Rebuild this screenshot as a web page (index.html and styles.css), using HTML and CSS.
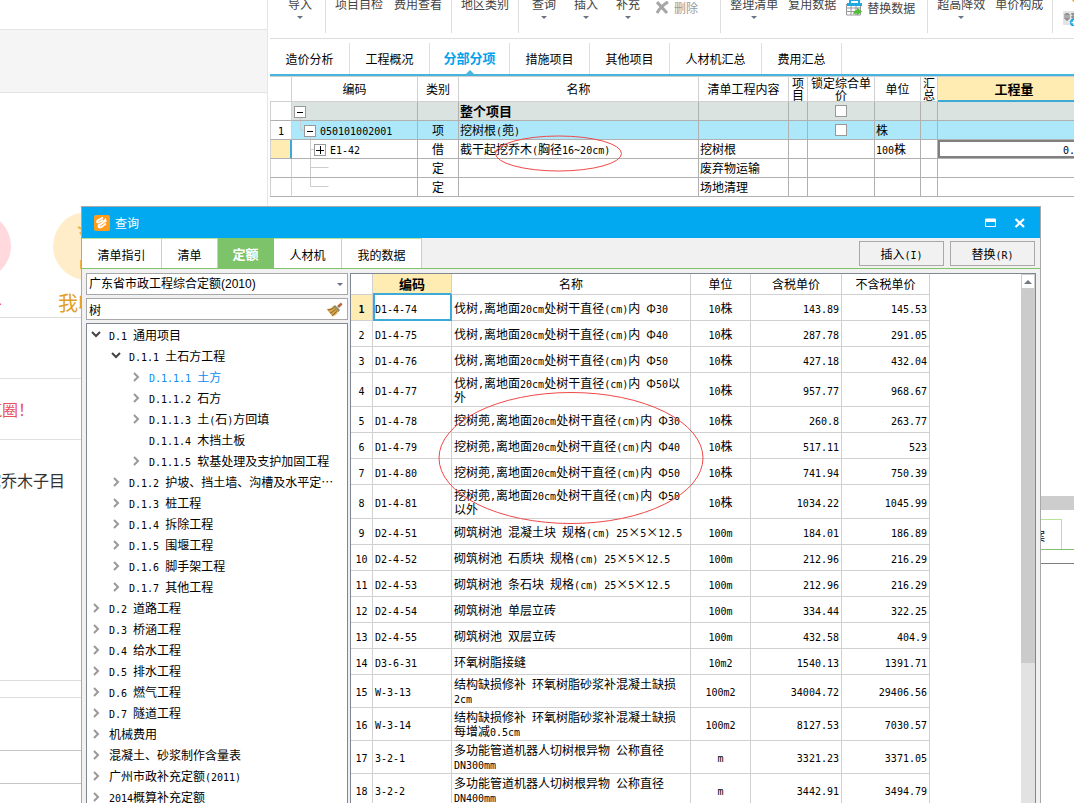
FILE: index.html
```html
<!DOCTYPE html>
<html lang="zh-CN">
<head>
<meta charset="utf-8">
<title>查询</title>
<link rel="stylesheet" href="styles.css">
</head>
<body>
<div class="desktop">
  <aside class="web">
    <div class="web-top"></div>
    <div class="web-banner"></div>
    <div class="web-cards">
      <div class="circles">
        <span class="circle pink"></span>
        <span class="circle amber">
          <svg width="68" height="68" viewBox="0 0 68 68" fill="none" stroke="#f0b64a" stroke-width="2"><path d="M25 15l4 2 2 5M27 20l4 6M28 48v8l6 2"/></svg>
        </span>
      </div>
      <div class="circle-labels"><span class="l-pink">平</span><span class="l-amber">我收藏</span></div>
    </div>
    <div class="web-gap"></div>
    <div class="web-line red"><span>筑圈！</span></div>
    <div class="web-question"><span>挖乔木子目</span></div>
    <div class="web-r1"></div>
    <div class="web-r2"></div>
    <div class="web-r3"></div>
  </aside>

  <main class="app">
    <div class="ribbon">
      <div class="group g1"><button class="tool">导入<i class="caret"></i></button></div>
      <div class="group g2"><button class="tool">项目自检</button><button class="tool">费用查看</button></div>
      <div class="group g3"><button class="tool">地区类别</button></div>
      <div class="group g4">
        <button class="tool">查询<i class="caret"></i></button>
        <button class="tool">插入<i class="caret"></i></button>
        <button class="tool">补充<i class="caret"></i></button>
        <button class="tool wide off"><svg width="13" height="13" viewBox="0 0 13 13" fill="none" stroke="#a5a5a5" stroke-width="3"><path d="M1 1l10 11M12 1Q5 5 1 12"/></svg>删除</button>
      </div>
      <div class="group g5">
        <button class="tool">整理清单<i class="caret"></i></button>
        <button class="tool">复用数据</button>
        <button class="tool wide"><svg width="16" height="16" viewBox="0 0 16 16"><path d="M.5 4v11h14V6" fill="#fff" stroke="#999"/><path d="M.5 8h14M.5 11.500h14M5 5v10M10 5v10" stroke="#999" fill="none"/><path d="M3 0h11v3H3zM1 3h15v3H1z" fill="#20a9e1"/><path d="M5 1h7v2H5z" fill="#fff"/><path d="M7 14q1-4 4-4V7.500l5 4-5 4v-2q-2 0-4 .5z" fill="#4fbf37"/></svg>替换数据</button>
      </div>
      <div class="group g6"><button class="tool">超高降效<i class="caret"></i></button><button class="tool">单价构成</button></div>
      <div class="group g7">
        <svg width="18" height="26" viewBox="0 0 18 26"><circle cx="13" cy="-1" r="3" fill="#ffa216"/><rect x="1" y="11" width="16" height="14" rx="1" fill="#e3e3e3"/><path d="M3 14h4v5H3zM5 13v8M9 14h6M9 17h6M11 13v7" stroke="#777" fill="none"/><circle cx="12" cy="22.500" r="4" fill="#19a9e5"/><path d="M12 20v5M9.500 22.500h5" stroke="#fff" stroke-width="1.500"/></svg>
      </div>
    </div>
    <nav class="tabs">
      <a href="#a">造价分析</a><a href="#b">工程概况</a><a href="#c" class="on">分部分项</a><a href="#d">措施项目</a><a href="#e">其他项目</a><a href="#f" class="w">人材机汇总</a><a href="#g">费用汇总</a>
    </nav>
    <div class="sheet">
      <table class="items">
        <colgroup><col class="i0"><col class="i1"><col class="i2"><col class="i3"><col class="i4"><col class="i5"><col class="i6"><col class="i7"><col class="i8"><col></colgroup>
        <thead><tr><th></th><th>编码</th><th>类别</th><th>名称</th><th>清单工程内容</th><th>项目</th><th>锁定综合单价</th><th>单位</th><th>汇总</th><th class="sel">工程量</th></tr></thead>
        <tbody>
          <tr class="total"><td></td>
            <td class="code"><svg class="guide" width="60" height="19"><path d="M8.500 15v4"/></svg><button class="exp" aria-label="收起"><svg width="10" height="10"><path d="M2 5h6"/></svg></button></td>
            <td></td><td class="strong">整个项目</td><td></td><td></td><td class="c"><input type="checkbox" aria-label="锁定综合单价"></td><td></td><td></td><td></td></tr>
          <tr class="picked"><td class="c"><span class="hw">1</span></td>
            <td class="code d1"><svg class="guide" width="60" height="19"><path d="M8.500 0v9.500h4M18.500 15v4"/></svg><button class="exp" aria-label="收起"><svg width="10" height="10"><path d="M2 5h6"/></svg></button><span class="hw">050101002001</span></td>
            <td class="c">项</td><td>挖树根<span class="hw">(</span>蔸<span class="hw">)</span></td><td></td><td></td><td class="c"><input type="checkbox" aria-label="锁定综合单价"></td><td>株</td><td></td><td></td></tr>
          <tr><td class="cur"></td>
            <td class="code d2"><svg class="guide" width="60" height="19"><path d="M18.500 0v19M18.500 9.500h4"/></svg><button class="exp" aria-label="展开"><svg width="10" height="10"><path d="M1 5h8M5 1v8"/></svg></button><span class="hw">E1-42</span></td>
            <td class="c">借</td><td>截干起挖乔木<span class="hw">(</span>胸径<span class="hw">16~20cm)</span></td><td>挖树根</td><td></td><td></td><td><span class="hw">100</span>株</td><td></td><td class="qty"><span class="hw">0.</span></td></tr>
          <tr><td></td><td class="code"><svg class="guide" width="60" height="19"><path d="M18.500 0v19M18.500 8.500h18"/></svg></td>
            <td class="c">定</td><td></td><td>废弃物运输</td><td></td><td></td><td></td><td></td><td></td></tr>
          <tr><td></td><td class="code"><svg class="guide" width="60" height="19"><path d="M18.500 0v8.500h18"/></svg></td>
            <td class="c">定</td><td></td><td>场地清理</td><td></td><td></td><td></td><td></td><td></td></tr>
        </tbody>
      </table>
    </div>
    <div class="hbar"></div>
    <div class="lower"><span>方案</span></div>
    <div class="lower-line"></div>
  </main>

  <svg class="mark mark-s" viewBox="0 0 127 37" aria-hidden="true"><ellipse cx="63.500" cy="18.500" rx="63" ry="17.500"/></svg>

  <section class="dialog" role="dialog" aria-labelledby="dlg-title">
    <header class="title">
      <svg width="16" height="16" viewBox="0 0 16 16"><rect width="16" height="16" rx="2" fill="#ff9c1b"/><path d="M9 2.500L3.500 5.500q-1.500 2 1 2L9 5M12.500 5.500L7 9q-3 .5-2.500 2.500 1 2 3 .5l4.500-3.500" fill="none" stroke="#fff" stroke-width="1.700"/><path d="M12 3.500L4 12.500" stroke="#fff" stroke-width="1.200"/></svg>
      <span id="dlg-title">查询</span>
      <button aria-label="最大化"><svg width="12" height="10" viewBox="0 0 12 10"><path d="M.5 1h10v7.500H.5z" fill="none" stroke="#fff"/><path d="M0 1h11v3H0z" fill="#fff"/></svg></button>
      <button aria-label="关闭"><svg width="12" height="10" viewBox="0 0 12 10"><path d="M1.500 1l8.500 8M10 1L1.500 9" stroke="#fff" stroke-width="2.200"/></svg></button>
    </header>
    <div class="bar">
      <nav class="dtabs">
        <a href="#1" class="t1">清单指引</a><a href="#2" class="t2">清单</a><a href="#3" class="t2 on">定额</a><a href="#4" class="t3">人材机</a><a href="#5" class="t1">我的数据</a>
      </nav>
      <button class="btn">插入<span class="hw">(I)</span></button>
      <button class="btn">替换<span class="hw">(R)</span></button>
    </div>
    <div class="panes">
      <div class="left">
        <div class="field">
          <select aria-label="定额库"><option>广东省市政工程综合定额(2010)</option></select>
          <i class="caret"></i>
        </div>
        <div class="field">
          <input type="text" value="树" aria-label="查询内容">
          <svg width="17" height="15" viewBox="0 0 17 15"><path d="M11 4l4-3.500 1.500 2L13 6z" fill="#b9653c"/><path d="M9 3l5 5-1.500 2-6-5z" fill="#8c8a60"/><path d="M7 4.500L12.500 9Q11 13 6.500 14.500L.5 7Q5 7 7 4.500z" fill="#d9a94f"/><path d="M2 8q4-.5 6-2.500M4 11q4-1 5.500-4M6 13.500q3.500-2 5-5" stroke="#8c6327" fill="none"/></svg>
        </div>
        <ul class="tree" id="tree"></ul>
      </div>
      <div class="result">
        <div class="scroll">
          <table class="norms">
            <colgroup><col class="n0"><col class="n1"><col class="n2"><col class="n3"><col class="n4"><col class="n5"></colgroup>
            <thead><tr><th></th><th class="sel">编码</th><th>名称</th><th>单位</th><th>含税单价</th><th>不含税单价</th></tr></thead>
            <tbody id="norms"></tbody>
          </table>
        </div>
        <div class="vbar"><button aria-label="向上"></button><div class="thumb"></div></div>
      </div>
    </div>
  </section>

  <svg class="mark mark-l" viewBox="0 0 266 132" aria-hidden="true"><ellipse cx="133" cy="66" rx="132" ry="65.500"/></svg>
</div>
<script src="app.js"></script>
</body>
</html>
```
FILE: styles.css
```css
* { box-sizing: border-box; }
body {
  margin: 0;
  background: #fff;
  color: #000;
  font: 12px/16px "Noto Sans CJK SC", sans-serif;
}
button, input, select { font: inherit; color: inherit; margin: 0; padding: 0; border: 0; background: none; }
a { color: inherit; text-decoration: none; }
svg { display: block; flex: none; }
.hw { font-family: "DejaVu Sans Mono", monospace; font-size: 10px; line-height: 10px; }
.fw { display: inline-block; width: 12px; line-height: 12px; text-align: center; }
.caret { display: block; width: 0; border: 3px solid transparent; border-top-color: #6a7385; border-bottom: 0; }

.desktop { position: relative; display: flex; height: 100vh; overflow: hidden; }

/* web page behind the application */
.web { width: 268px; flex: none; border-right: 1px solid #e6e6e6; overflow: hidden; }
.web-top { height: 30px; border-bottom: 1px solid #e4e4e4; }
.web-banner { height: 63px; background: #f5f5f5; border-bottom: 1px solid #e4e4e4; }
.web-cards { height: 225px; padding-top: 119px; border-bottom: 1px solid #dcdcdc; }
.circles { display: flex; gap: 42px; margin-left: -57px; }
.circle { width: 68px; height: 68px; border-radius: 50%; overflow: hidden; flex: none; }
.pink { background: #ffd9de; }
.amber { background: #ffedca; }
.circle-labels { display: flex; gap: 56px; margin-left: -18px; margin-top: 10px; font-size: 20px; line-height: 26px; }
.l-pink { color: #ee4f86; }
.l-amber { color: #dfa01f; }
.web-gap { height: 61px; border-bottom: 1px solid #e0e0e0; }
.web-line, .web-question { display: flex; justify-content: flex-end; overflow: hidden; font-size: 16px; }
.web-line { height: 61px; padding-right: 233px; align-items: center; border-bottom: 1px solid #e0e0e0; color: #e8505b; }
.web-question { height: 241px; padding: 28px 202px 0 0; line-height: 24px; color: #333; border-bottom: 1px solid #dcdcdc; }
.web-line span, .web-question span { white-space: nowrap; flex: none; }
.web-r1 { height: 17px; border-bottom: 1px solid #dcdcdc; }
.web-r2 { height: 53px; border-bottom: 1px solid #c4c4c4; }
.web-r3 { height: 33px; border-bottom: 1px solid #c4c4c4; }

/* application */
.app { flex: 1; min-width: 0; margin-left: 2px; overflow: hidden; }
.ribbon { display: flex; height: 39px; border-bottom: 1px solid #dedede; color: #444; overflow: hidden; }
.group { display: flex; flex: none; height: 33px; gap: 10px; border-right: 1px solid #dedede; padding: 0 9px; }
.g1 { padding: 0 13px 0 18px; }
.g2 { gap: 11px; }
.g4 { gap: 18px; padding: 0 22px 0 13px; }
.g4 .wide { margin-left: -2px; }
.g5 { padding: 0 12px 0 9px; }
.g5 .wide { gap: 4px; }
.g7 { border: 0; }
.tool { display: flex; flex-direction: column; align-items: center; gap: 4px; height: 24px; margin-top: -4px; flex: none; }
.tool.wide { flex-direction: row; gap: 5px; margin-top: 0; height: 15px; }
.off { color: #999; }
.tabs { display: flex; height: 37px; padding-top: 4px; border-bottom: 2px solid #45b5e0; }
.tabs a { width: 80px; border-right: 1px solid #dedede; line-height: 32px; text-align: center; }
.tabs .w { width: 92px; }
.tabs .on { position: relative; color: #02a2ec; font-weight: 700; font-size: 13px; line-height: 30px; }
.tabs .on::after { content: ""; position: absolute; left: 36px; bottom: 0; border: 4px solid transparent; border-bottom-color: #45b5e0; border-top: 0; }
.sheet { height: 420px; overflow: hidden; }

table { border-collapse: separate; border-spacing: 0; table-layout: fixed; }
th, td { padding: 0; font-weight: 400; text-align: left; white-space: pre; overflow: hidden; }
th { text-align: center; }
.c { text-align: center; }
.sel { background: #ffecb3; border-bottom: 2px solid #3ca9d6 !important; font-weight: 700; font-size: 13px; }

/* the last column runs on past the window's edge */
.items { width: calc(100% + 17px); }
.i0 { width: 22px; } .i1 { width: 126px; } .i2 { width: 41px; } .i3 { width: 240px; } .i4 { width: 90px; }
.i5 { width: 19px; } .i6 { width: 67px; } .i7 { width: 46px; } .i8 { width: 17px; }
.items th { height: 26px; line-height: 12px; white-space: normal; border: solid #d0d0d0; border-width: 1px 1px 1px 0; }
.items td { height: 19px; line-height: 14px; padding-left: 1px; border: solid #b0b0b0; border-width: 0 1px 1px 0; }
.items td:first-child { border-left: 1px solid #d0d0d0; border-right-color: #d0d0d0; }
.total td:not(:first-child) { background: #dae3df; }
.picked td:not(:first-child) { background: #ade8fa; }
.strong { font-weight: 700; font-size: 13px; }
.items td.c { padding-left: 0; }
.items td.cur { background: #ffecb3; border-right: 2px solid #3ca9d6; }
.items .qty { box-shadow: inset 0 0 0 2px #808080; padding-right: 15px; text-align: right; }
.items .code { position: relative; padding-left: 2px; }
.items .d1 { padding-left: 12px; }
.items .d2 { padding-left: 22px; }
.guide { position: absolute; left: 0; top: 0; fill: none; stroke: #ccc; }
.exp { position: relative; display: inline-block; width: 12px; height: 12px; margin-right: 4px; border: 1px solid #999; background: #fff; vertical-align: middle; }
.exp svg { stroke: #000; shape-rendering: crispEdges; }
input[type="checkbox"] { appearance: none; display: block; width: 12px; height: 12px; margin: 0 auto; border: 1px solid #999; background: #fff; }

.hbar { height: 14px; background: #cdcdcd; }
.lower { display: flex; justify-content: flex-end; height: 30px; width: 792px; margin-top: 9px; padding: 8px 16px 0 0; border: 1px solid #b5e39a; border-bottom: 0; }
.lower-line { height: 15px; border: solid #84c06c; border-width: 1px 0 0; border-bottom: 1px solid #808080; }

/* red ellipses drawn over the windows */
.mark { position: absolute; fill: none; stroke: #f04848; }
.mark-s { left: 495px; top: 135px; width: 127px; }
.mark-l { left: 438px; top: 392px; width: 266px; }

/* query dialog */
.dialog {
  position: absolute; left: 81px; right: 33px; top: 206px; bottom: 0;
  display: flex; flex-direction: column;
  border: 1px solid #a8a8a8; border-bottom: 0; background: #f1f1f1; overflow: hidden;
}
.title { display: flex; align-items: center; flex: none; height: 31px; padding: 0 14px 0 12px; gap: 17px; background: #02a9f1; color: #fff; }
.title span { flex: 1; margin-left: -12px; }
.bar { display: flex; align-items: center; flex: none; height: 31px; padding-right: 5px; gap: 6px; border-bottom: 1px solid #82c46c; }
.dtabs { display: flex; flex: 1; height: 30px; }
.dtabs a { border: solid #b5e39a; border-width: 1px 1px 0 0; background: #fff; line-height: 31px; text-align: center; }
.t1 { width: 80px; } .t2 { width: 56px; } .t3 { width: 68px; }
.dtabs .on { background: #7dc36a; border-color: #7dc36a; color: #fff; font-weight: 700; font-size: 13px; line-height: 29px; }
.btn { width: 85px; height: 25px; border: 1px solid #a8a8a8; line-height: 23px; }
.panes { display: flex; flex: 1; min-height: 0; padding: 4px 4px 0; gap: 2px; }
.left { display: flex; flex-direction: column; width: 262px; gap: 3px; flex: none; }
.field { display: flex; align-items: center; flex: none; height: 22px; padding-right: 4px; border: 1px solid #a8a8a8; background: #fff; }
.field select, .field input { flex: 1; min-width: 0; height: 20px; padding-left: 2px; appearance: none; outline: 0; }
.field select { font-family: "Liberation Sans", "Noto Sans CJK SC", sans-serif; }
.tree { flex: 1; min-height: 0; overflow: hidden; margin: 0; padding: 0; list-style: none; border: 1px solid #7f8794; border-bottom: 0; background: #fff; }
.tree li { display: flex; align-items: center; height: 21px; padding-left: 4px; gap: 8px; white-space: pre; }
.tree .lv1 { padding-left: 24px; }
.tree .lv2 { padding-left: 44px; }
.tree svg { width: 10px; height: 10px; fill: none; stroke: #999; stroke-width: 2; }
.tree .open svg { stroke: #444; }
.tree .none svg { visibility: hidden; }
.tree .hot { color: #0a8cf5; }

.result { display: flex; flex: 1; min-width: 0; border: 1px solid #7f8794; border-bottom: 0; background: #fff; }
.scroll { flex: 1; min-width: 0; overflow: hidden; }
.norms { width: 579px; }
.n0 { width: 22px; } .n1 { width: 79px; } .n2 { width: 239px; } .n3 { width: 60px; } .n4 { width: 91px; } .n5 { width: 88px; }
.norms th, .norms td { border: solid #d0d0d0; border-width: 0 1px 1px 0; }
.norms th { height: 21px; line-height: 18px; }
.norms td { height: 26px; padding: 0 2px; line-height: 14px; }
.norms .two td { height: 33px; }
.norms .two.hi td { height: 34px; }
.norms td.c { padding: 0; }
.norms .n { text-align: right; }
.norms .cur .c:first-child { background: #ffecb3; font-weight: 700; }
.norms .cur .k { border-color: #3ca9d6; box-shadow: inset 2px 0 #3ca9d6, inset -1px -1px #3ca9d6; }
.vbar { width: 14px; flex: none; background: #e2e2e2; }
.vbar button { display: block; width: 14px; height: 15px; border: 1px solid #cdcdcd; background: #fff; }
.vbar button::after { content: ""; display: block; width: 0; margin: 0 auto; border: 4px solid transparent; border-bottom-color: #707880; border-top: 0; }
.thumb { height: 374px; background: #cbcbcb; }
```
FILE: app.js
```js
// Half-width runs get the narrow monospace face so that two of them fill one Chinese character.
function mixed(text) {
  return text
    .replace(/[\x20-\x7e]+/g, function (run) { return '<span class="hw">' + run + '</span>'; })
    .replace(/×/g, '<span class="fw">×</span>');
}

// [level, state, label]
var tree = [
  [0, 'open', 'D.1 通用项目'],
  [1, 'open', 'D.1.1 土石方工程'],
  [2, 'hot', 'D.1.1.1 土方'],
  [2, '', 'D.1.1.2 石方'],
  [2, '', 'D.1.1.3 土(石)方回填'],
  [2, 'none', 'D.1.1.4 木挡土板'],
  [2, '', 'D.1.1.5 软基处理及支护加固工程'],
  [1, '', 'D.1.2 护坡、挡土墙、沟槽及水平定⋯'],
  [1, '', 'D.1.3 桩工程'],
  [1, '', 'D.1.4 拆除工程'],
  [1, '', 'D.1.5 围堰工程'],
  [1, '', 'D.1.6 脚手架工程'],
  [1, '', 'D.1.7 其他工程'],
  [0, '', 'D.2 道路工程'],
  [0, '', 'D.3 桥涵工程'],
  [0, '', 'D.4 给水工程'],
  [0, '', 'D.5 排水工程'],
  [0, '', 'D.6 燃气工程'],
  [0, '', 'D.7 隧道工程'],
  [0, '', '机械费用'],
  [0, '', '混凝土、砂浆制作含量表'],
  [0, '', '广州市政补充定额(2011)'],
  [0, '', '2014概算补充定额']
];
document.getElementById('tree').innerHTML = tree.map(function (t) {
  var path = t[1] === 'open' ? 'M1 2l4 4 4-4' : 'M3 1l4 4-4 4';
  return '<li class="lv' + t[0] + ' ' + t[1] + '"><svg viewBox="0 0 10 10"><path d="' + path +
    '"/></svg><span>' + mixed(t[2]) + '</span></li>';
}).join('');

var norms = [
  ['D1-4-74', '伐树,离地面20cm处树干直径(cm)内 Φ30', '10株', '143.89', '145.53'],
  ['D1-4-75', '伐树,离地面20cm处树干直径(cm)内 Φ40', '10株', '287.78', '291.05'],
  ['D1-4-76', '伐树,离地面20cm处树干直径(cm)内 Φ50', '10株', '427.18', '432.04'],
  ['D1-4-77', '伐树,离地面20cm处树干直径(cm)内 Φ50以\n外', '10株', '957.77', '968.67'],
  ['D1-4-78', '挖树蔸,离地面20cm处树干直径(cm)内 Φ30', '10株', '260.8', '263.77'],
  ['D1-4-79', '挖树蔸,离地面20cm处树干直径(cm)内 Φ40', '10株', '517.11', '523'],
  ['D1-4-80', '挖树蔸,离地面20cm处树干直径(cm)内 Φ50', '10株', '741.94', '750.39'],
  ['D1-4-81', '挖树蔸,离地面20cm处树干直径(cm)内 Φ50\n以外', '10株', '1034.22', '1045.99'],
  ['D2-4-51', '砌筑树池 混凝土块 规格(cm) 25×5×12.5', '100m', '184.01', '186.89'],
  ['D2-4-52', '砌筑树池 石质块 规格(cm) 25×5×12.5', '100m', '212.96', '216.29'],
  ['D2-4-53', '砌筑树池 条石块 规格(cm) 25×5×12.5', '100m', '212.96', '216.29'],
  ['D2-4-54', '砌筑树池 单层立砖', '100m', '334.44', '322.25'],
  ['D2-4-55', '砌筑树池 双层立砖', '100m', '432.58', '404.9'],
  ['D3-6-31', '环氧树脂接缝', '10m2', '1540.13', '1391.71'],
  ['W-3-13', '结构缺损修补 环氧树脂砂浆补混凝土缺损\n2cm', '100m2', '34004.72', '29406.56'],
  ['W-3-14', '结构缺损修补 环氧树脂砂浆补混凝土缺损\n每增减0.5cm', '100m2', '8127.53', '7030.57'],
  ['3-2-1', '多功能管道机器人切树根异物 公称直径\nDN300mm', 'm', '3321.23', '3371.05'],
  ['3-2-2', '多功能管道机器人切树根异物 公称直径\nDN400mm', 'm', '3442.91', '3494.79']
];
document.getElementById('norms').innerHTML = norms.map(function (r, i) {
  var cls = (i === 0 ? 'cur ' : '') + (r[1].indexOf('\n') > 0 ? 'two ' : '') + (r[1].indexOf('Φ') > 0 ? 'hi' : '');
  return '<tr class="' + cls + '"><td class="c">' + mixed(String(i + 1)) + '</td><td class="k">' + mixed(r[0]) +
    '</td><td>' + mixed(r[1]) + '</td><td class="c">' + mixed(r[2]) + '</td><td class="n">' + mixed(r[3]) +
    '</td><td class="n">' + mixed(r[4]) + '</td></tr>';
}).join('');
```
